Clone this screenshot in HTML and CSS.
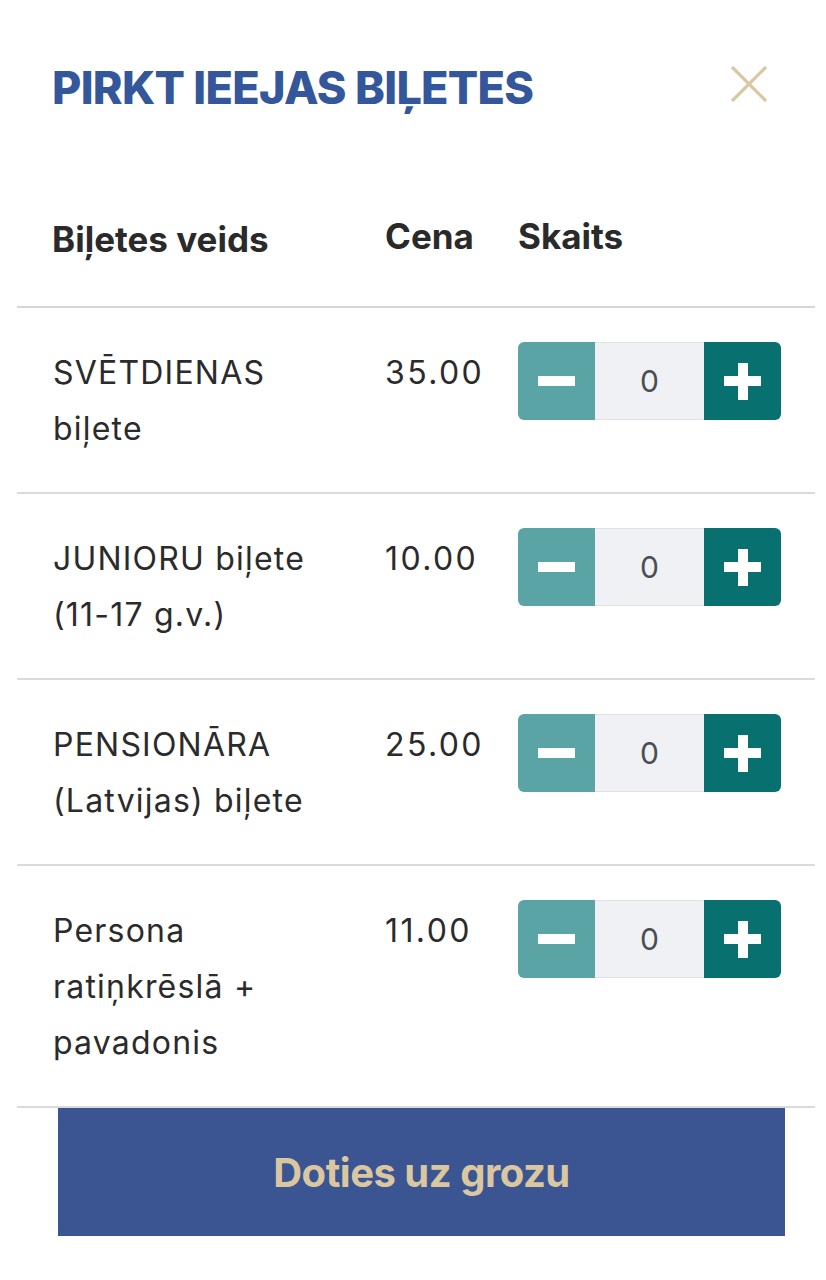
FILE: index.html
```html
<!DOCTYPE html>
<html lang="lv">
<head>
<meta charset="utf-8">
<title>Pirkt ieejas biļetes</title>
<link rel="stylesheet" href="styles.css">
</head>
<body>
<div class="modal">
  <div class="modal-head">
    <h1 class="title">PIRKT IEEJAS BIĻETES</h1>
    <button class="close" aria-label="Aizvērt">
      <svg viewBox="0 0 40 40" width="40" height="40"><path d="M3 3 L37 37 M37 3 L3 37" stroke="#d9c8a2" stroke-width="3.2" fill="none"/></svg>
    </button>
  </div>

  <div class="thead">
    <div class="col-name">Biļetes veids</div>
    <div class="col-price">Cena</div>
    <div class="col-qty">Skaits</div>
  </div>

  <div class="row">
    <div class="col-name">SVĒTDIENAS<br>biļete</div>
    <div class="col-price">35.00</div>
    <div class="col-qty">
      <div class="stepper"><span class="btn minus"></span><span class="val">0</span><span class="btn plus"></span></div>
    </div>
  </div>

  <div class="row">
    <div class="col-name">JUNIORU biļete<br>(11-17 g.v.)</div>
    <div class="col-price">10.00</div>
    <div class="col-qty">
      <div class="stepper"><span class="btn minus"></span><span class="val">0</span><span class="btn plus"></span></div>
    </div>
  </div>

  <div class="row">
    <div class="col-name">PENSIONĀRA<br>(Latvijas) biļete</div>
    <div class="col-price">25.00</div>
    <div class="col-qty">
      <div class="stepper"><span class="btn minus"></span><span class="val">0</span><span class="btn plus"></span></div>
    </div>
  </div>

  <div class="row">
    <div class="col-name">Persona<br>ratiņkrēslā +<br>pavadonis</div>
    <div class="col-price">11.00</div>
    <div class="col-qty">
      <div class="stepper"><span class="btn minus"></span><span class="val">0</span><span class="btn plus"></span></div>
    </div>
  </div>

  <button class="cart">Doties uz grozu</button>
</div>
</body>
</html>
```

FILE: styles.css
```css
* { box-sizing: border-box; }
html, body {
  margin: 0;
  padding: 0;
  background: #ffffff;
}
body {
  font-family: Inter, "Open Sans", "Liberation Sans", sans-serif;
  color: #2b2b2b;
}
.modal {
  width: 826px;
  padding: 0 11px 0 17px;
}
.modal-head {
  display: flex;
  align-items: center;
  justify-content: space-between;
  padding: 61px 46px 0 35px;
}
.title {
  margin: 0;
  font-size: 45px;
  line-height: 54px;
  font-weight: 800;
  letter-spacing: -0.7px;
  color: #34569a;
}
.close {
  border: 0;
  background: none;
  padding: 0;
  width: 40px;
  height: 40px;
  margin-top: -8px;
  cursor: pointer;
}
.close svg { display: block; }

.thead {
  display: flex;
  align-items: flex-start;
  padding: 106px 0 49px 35px;
  border-bottom: 2px solid #d6d6d6;
  font-size: 35px;
  line-height: 36px;
  font-weight: 700;
  letter-spacing: 0;
  color: #2a2a2a;
}
.thead .col-price, .thead .col-qty { margin-top: -3px; }

.col-name { width: 333px; flex: none; }
.col-price { width: 133px; flex: none; }
.col-qty { flex: none; }

.row {
  display: flex;
  align-items: flex-start;
  padding: 37px 0 35px 36px;
  border-bottom: 2px solid #dadada;
  font-size: 32px;
  line-height: 56px;
  letter-spacing: 1.2px;
}
.row .col-name { width: 332px; }
.row .col-price { width: 133px; letter-spacing: 2.4px; }

.stepper {
  display: flex;
  height: 78px;
  margin-top: -3px;
  border-radius: 6px;
  overflow: hidden;
}
.btn {
  position: relative;
  width: 77px;
  height: 78px;
  flex: none;
}
.minus { background: #5ba4a6; }
.plus { background: #08706e; }
.btn::before, .plus::after {
  content: "";
  position: absolute;
  left: 50%;
  top: 50%;
  width: 37px;
  height: 10px;
  margin: -5px 0 0 -18.5px;
  background: #ffffff;
}
.plus::after {
  width: 10px;
  height: 37px;
  margin: -18.5px 0 0 -5px;
}
.val {
  width: 109px;
  height: 78px;
  flex: none;
  display: flex;
  align-items: center;
  justify-content: center;
  background: #eff1f4;
  border-top: 1px solid #e0e3e6;
  border-bottom: 1px solid #e0e3e6;
  font-size: 30px;
  color: #4a4d52;
  letter-spacing: 0;
}

.cart {
  display: block;
  width: 727px;
  height: 128px;
  margin: 0 0 0 41px;
  border: 0;
  background: #3a5592;
  color: #dac7a0;
  font-family: Inter, "Open Sans", "Liberation Sans", sans-serif;
  font-size: 40px;
  font-weight: 700;
  letter-spacing: -0.5px;
  cursor: pointer;
}
```
